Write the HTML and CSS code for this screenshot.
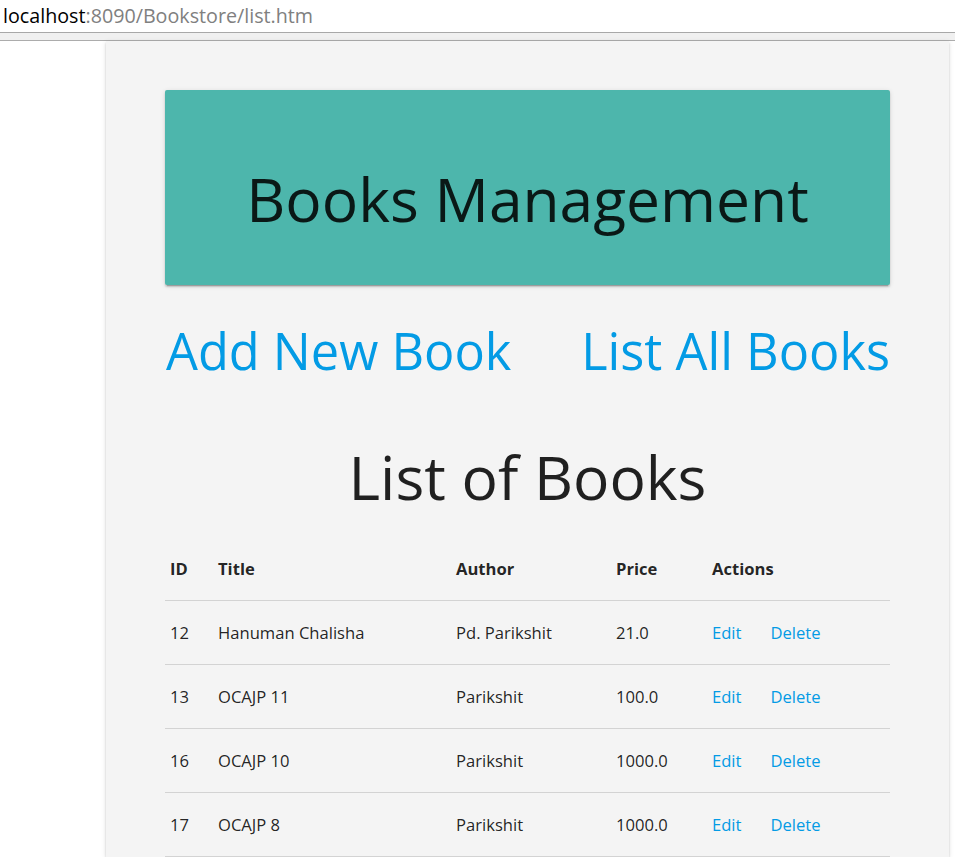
FILE: index.html
```html
<!DOCTYPE html>
<html>
<head>
<meta charset="utf-8">
<title>Books Management</title>
<link rel="stylesheet" href="styles.css">
</head>
<body>
<div class="urlbar"><span class="host">localhost</span><span class="path">:8090/Bookstore/list.htm</span></div>
<div class="strip"></div>
<div class="card">
  <div class="banner"><h1>Books Management</h1></div>
  <div class="navlinks">
    <a href="#">Add New Book</a>
    <a href="#">List All Books</a>
  </div>
  <h2 class="title">List of Books</h2>
  <table class="books">
    <thead>
      <tr><th class="c-id">ID</th><th class="c-title">Title</th><th class="c-author">Author</th><th class="c-price">Price</th><th class="c-act">Actions</th></tr>
    </thead>
    <tbody>
      <tr><td>12</td><td>Hanuman Chalisha</td><td>Pd. Parikshit</td><td>21.0</td><td><a href="#" class="edit">Edit</a><a href="#">Delete</a></td></tr>
      <tr><td>13</td><td>OCAJP 11</td><td>Parikshit</td><td>100.0</td><td><a href="#" class="edit">Edit</a><a href="#">Delete</a></td></tr>
      <tr><td>16</td><td>OCAJP 10</td><td>Parikshit</td><td>1000.0</td><td><a href="#" class="edit">Edit</a><a href="#">Delete</a></td></tr>
      <tr><td>17</td><td>OCAJP 8</td><td>Parikshit</td><td>1000.0</td><td><a href="#" class="edit">Edit</a><a href="#">Delete</a></td></tr>
    </tbody>
  </table>
</div>
</body>
</html>
```
FILE: styles.css
```css
html, body { margin: 0; padding: 0; background: #fff; }
body { font-family: "Open Sans", "Noto Sans", sans-serif; color: rgba(0,0,0,0.87); overflow: hidden; }

.urlbar {
  box-sizing: border-box;
  height: 33px;
  line-height: 32px;
  padding-left: 3px;
  font-size: 19.7px;
  border-bottom: 1px solid #a8a8a8;
}
.urlbar .host { color: #000; }
.urlbar .path { color: #808080; }
.strip { height: 7px; background: #f0f0f0; border-bottom: 1px solid #acacac; }

.card {
  margin-left: 106px;
  width: 843px;
  box-sizing: border-box;
  background: #f4f4f4;
  padding: 49px 59px 0 59px;
  height: 816px;
  box-shadow: 0 2px 2px 0 rgba(0,0,0,0.14), 0 1px 5px 0 rgba(0,0,0,0.12), 0 3px 1px -2px rgba(0,0,0,0.2);
}

.banner {
  height: 195px;
  background: #4db6ac;
  border-radius: 2px;
  box-shadow: 0 2px 2px 0 rgba(0,0,0,0.14), 0 1px 5px 0 rgba(0,0,0,0.12), 0 3px 1px -2px rgba(0,0,0,0.2);
  display: flex;
  align-items: center;
  justify-content: center;
}
.banner h1 {
  margin: 24px 0 0 0;
  font-weight: 400;
  font-size: 60.5px;
  line-height: 1;
  color: rgba(0,0,0,0.87);
}

.navlinks {
  display: flex;
  justify-content: space-between;
  margin-top: 36px;
  padding-left: 1px;
}
.navlinks a {
  font-size: 50.5px;
  line-height: 60px;
  color: #039be5;
  text-decoration: none;
}

.title {
  text-align: center;
  font-weight: 400;
  font-size: 60.5px;
  line-height: 70px;
  margin: 61px 0 0 0;
}

.books {
  width: 100%;
  border-collapse: collapse;
  margin-top: 25px;
  font-size: 16.6px;
}
.books th, .books td {
  text-align: left;
  padding: 0 5px;
  height: 63px;
  vertical-align: middle;
}
.books th { font-weight: 700; }
.books tr { border-bottom: 1px solid #d3d3d3; }
.c-id { width: 38px; }
.c-title { width: 228px; }
.c-author { width: 150px; }
.c-price { width: 86px; }
.books a { color: #039be5; text-decoration: none; }
.books a.edit { margin-right: 29px; }
```
